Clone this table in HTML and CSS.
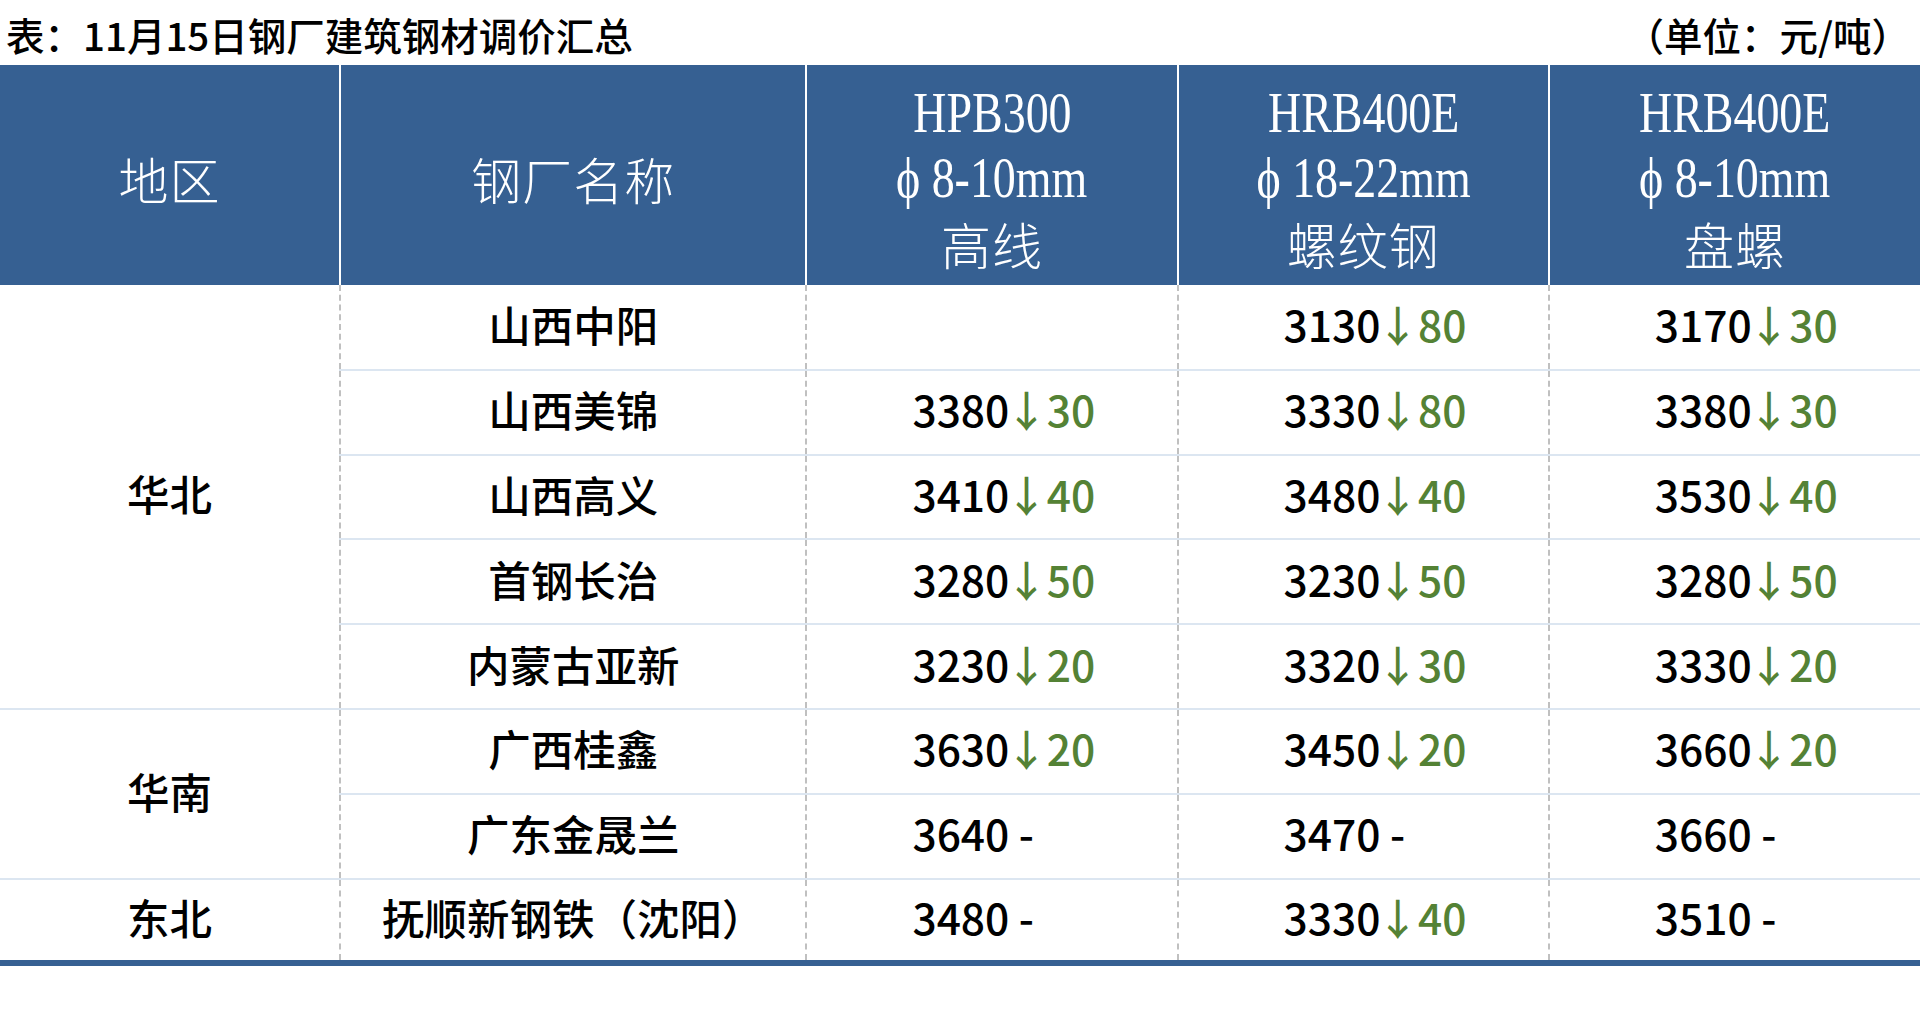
FILE: index.html
```html
<!DOCTYPE html>
<html lang="zh-CN">
<head>
<meta charset="utf-8">
<title>11月15日钢厂建筑钢材调价汇总</title>
<link rel="stylesheet" href="styles.css">
</head>
<body>
<div class="caption-bar">
  <div class="caption-title">表：11月15日钢厂建筑钢材调价汇总</div>
  <div class="caption-unit">（单位：元/吨）</div>
</div>
<table class="prices">
  <colgroup>
    <col class="c-region">
    <col class="c-mill">
    <col class="c-spec">
    <col class="c-spec">
    <col class="c-spec">
  </colgroup>
  <thead>
    <tr>
      <th class="h-cjk">地区</th>
      <th class="h-cjk">钢厂名称</th>
      <th><span class="lat">HPB300</span><br><span class="lat">ϕ 8-10mm</span><br><span class="h-cjk">高线</span></th>
      <th><span class="lat">HRB400E</span><br><span class="lat">ϕ 18-22mm</span><br><span class="h-cjk">螺纹钢</span></th>
      <th><span class="lat">HRB400E</span><br><span class="lat">ϕ 8-10mm</span><br><span class="h-cjk">盘螺</span></th>
    </tr>
  </thead>
  <tbody>
    <tr>
      <td class="region" rowspan="5">华北</td>
      <td class="mill">山西中阳</td>
      <td class="price"></td>
      <td class="price">3130<span class="down"><span class="arrow">↓</span>80</span></td>
      <td class="price">3170<span class="down"><span class="arrow">↓</span>30</span></td>
    </tr>
    <tr>
      <td class="mill">山西美锦</td>
      <td class="price">3380<span class="down"><span class="arrow">↓</span>30</span></td>
      <td class="price">3330<span class="down"><span class="arrow">↓</span>80</span></td>
      <td class="price">3380<span class="down"><span class="arrow">↓</span>30</span></td>
    </tr>
    <tr>
      <td class="mill">山西高义</td>
      <td class="price">3410<span class="down"><span class="arrow">↓</span>40</span></td>
      <td class="price">3480<span class="down"><span class="arrow">↓</span>40</span></td>
      <td class="price">3530<span class="down"><span class="arrow">↓</span>40</span></td>
    </tr>
    <tr>
      <td class="mill">首钢长治</td>
      <td class="price">3280<span class="down"><span class="arrow">↓</span>50</span></td>
      <td class="price">3230<span class="down"><span class="arrow">↓</span>50</span></td>
      <td class="price">3280<span class="down"><span class="arrow">↓</span>50</span></td>
    </tr>
    <tr>
      <td class="mill">内蒙古亚新</td>
      <td class="price">3230<span class="down"><span class="arrow">↓</span>20</span></td>
      <td class="price">3320<span class="down"><span class="arrow">↓</span>30</span></td>
      <td class="price">3330<span class="down"><span class="arrow">↓</span>20</span></td>
    </tr>
    <tr>
      <td class="region" rowspan="2">华南</td>
      <td class="mill">广西桂鑫</td>
      <td class="price">3630<span class="down"><span class="arrow">↓</span>20</span></td>
      <td class="price">3450<span class="down"><span class="arrow">↓</span>20</span></td>
      <td class="price">3660<span class="down"><span class="arrow">↓</span>20</span></td>
    </tr>
    <tr>
      <td class="mill">广东金晟兰</td>
      <td class="price">3640 -</td>
      <td class="price">3470 -</td>
      <td class="price">3660 -</td>
    </tr>
    <tr class="last">
      <td class="region">东北</td>
      <td class="mill">抚顺新钢铁（沈阳）</td>
      <td class="price">3480 -</td>
      <td class="price">3330<span class="down"><span class="arrow">↓</span>40</span></td>
      <td class="price">3510 -</td>
    </tr>
  </tbody>
</table>
</body>
</html>
```
FILE: styles.css
```css
html, body {
  margin: 0;
  padding: 0;
  background: #ffffff;
}

body {
  font-family: "Noto Sans CJK SC", "Noto Sans", sans-serif;
  color: #000000;
  width: 1920px;
}

.caption-bar {
  height: 65px;
  box-sizing: border-box;
  padding: 3px 10px 0 6px;
  display: flex;
  align-items: center;
  justify-content: space-between;
  font-size: 38.5px;
  font-weight: 500;
  line-height: 1;
}

.prices {
  width: 1920px;
  border-collapse: collapse;
  table-layout: fixed;
}

.c-region { width: 340px; }
.c-mill { width: 466px; }
.c-spec { width: 371px; }

.prices thead tr {
  height: 220px;
}

.prices th {
  background: #366092;
  color: #ffffff;
  font-weight: 300;
  font-size: 50px;
  line-height: 65px;
  padding: 16px 0 9px;
  text-align: center;
  vertical-align: middle;
  border-right: 2px solid #ffffff;
}

.prices th:last-child {
  border-right: none;
}

.h-cjk {
  font-family: "Noto Sans CJK SC", sans-serif;
  font-weight: 300;
  letter-spacing: 1px;
}

.lat {
  display: inline-block;
  vertical-align: top;
  line-height: 65px;
  font-family: "Liberation Serif", "DejaVu Serif", serif;
  font-size: 56px;
  font-weight: 400;
  transform: scaleX(0.82);
  white-space: nowrap;
}

.prices tbody tr {
  height: 84.8px;
}

.prices td {
  padding: 0 0 7px;
  font-size: 42.5px;
  font-weight: 500;
  text-align: center;
  vertical-align: middle;
  border-right: 2px dashed #c0c0c0;
  border-bottom: 2px solid #dce6f1;
  white-space: nowrap;
}

.prices td:last-child {
  border-right: none;
}

.prices td.price {
  text-align: left;
  padding-left: 105px;
}

.down {
  color: #548235;
}

.arrow {
  margin: 0 -1px 0 -4px;
}

.prices tr.last td {
  border-bottom: 6px solid #366092;
}
```
